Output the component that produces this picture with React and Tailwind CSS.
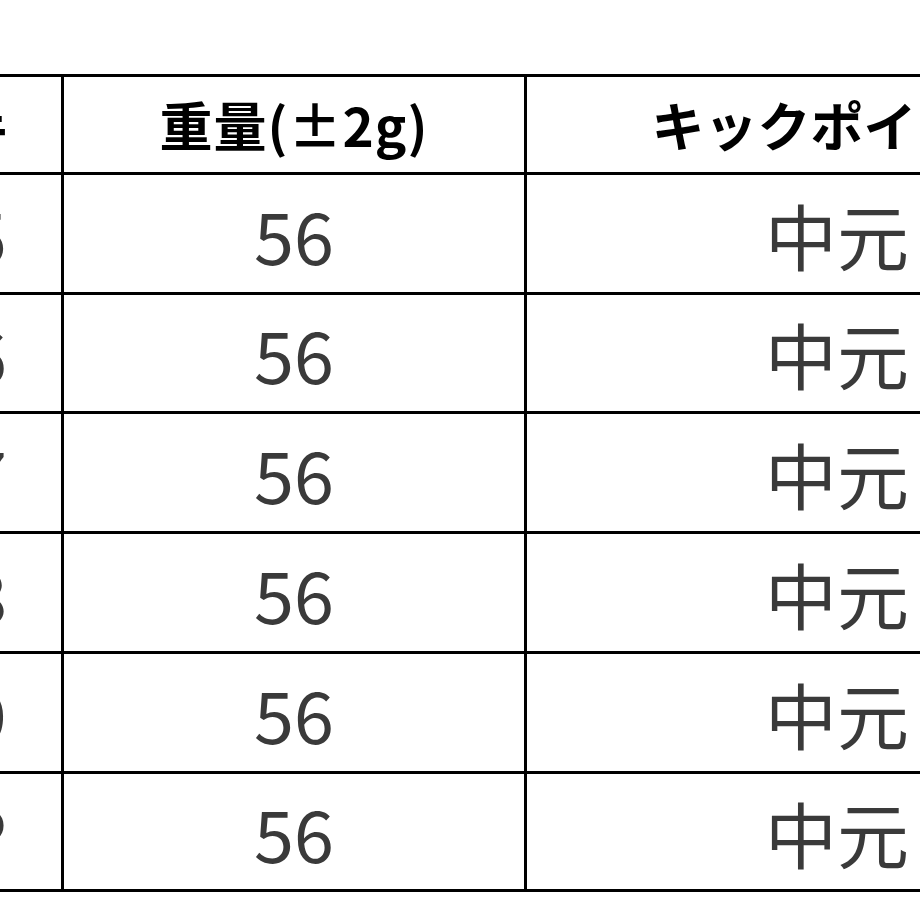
const rows = [
  { no: "5", weight: "56", kick: "中元", h: "h-[120px]" },
  { no: "6", weight: "56", kick: "中元", h: "h-[119px]" },
  { no: "7", weight: "56", kick: "中元", h: "h-[120px]" },
  { no: "8", weight: "56", kick: "中元", h: "h-[120px]" },
  { no: "9", weight: "56", kick: "中元", h: "h-[120px]" },
  { no: "P", weight: "56", kick: "中元", h: "h-[118px]" },
];

function App() {
  return (
    <div
      className="w-[920px] h-[920px] overflow-hidden bg-white pt-[74px]"
      style={{ fontFamily: '"Noto Sans CJK JP", "Noto Sans", sans-serif' }}
    >
      <div className="ml-[-150px] w-[1300px] border-t-[3px] border-black">
        <div className="flex h-[98px]">
          <div className="w-[214px] shrink-0 border-r-[3px] border-b-[3px] border-black flex items-center justify-end pr-[54px] text-[53px] font-bold text-black">
            手
          </div>
          <div className="w-[463px] shrink-0 border-r-[3px] border-b-[3px] border-black flex items-center justify-center text-[53px] font-bold text-black tracking-[1px]">
            重量(±2g)
          </div>
          <div className="w-[620px] shrink-0 border-b-[3px] border-black flex items-center justify-center text-[53px] font-bold text-black tracking-[0px]">
            キックポイント
          </div>
        </div>
        {rows.map((r) => (
          <div key={r.no} className={`flex ${r.h}`}>
            <div className="w-[214px] shrink-0 border-r-[3px] border-b-[3px] border-black flex items-center justify-end pr-[54px] text-[72px] text-[#3a3a3a]">
              {r.no}
            </div>
            <div className="w-[463px] shrink-0 border-r-[3px] border-b-[3px] border-black flex items-center justify-center text-[72px] text-[#3a3a3a]">
              {r.weight}
            </div>
            <div className="w-[620px] shrink-0 border-b-[3px] border-black flex items-center justify-center text-[72px] text-[#3a3a3a]">
              {r.kick}
            </div>
          </div>
        ))}
      </div>
    </div>
  );
}

export default App;
